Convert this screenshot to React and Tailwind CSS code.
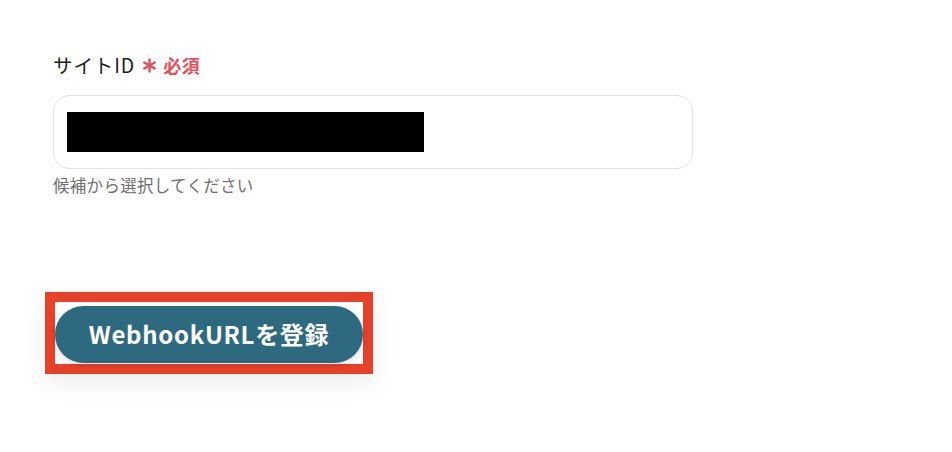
export default function App() {
  return (
    <div className="w-[952px] h-[452px] bg-white" style={{ fontFamily: '"Noto Sans CJK JP", "Noto Sans", sans-serif' }}>
      <div className="pl-[53px] pt-[51px]">
        <div className="flex items-center h-[28px]">
          <span className="text-[19.5px] text-[#222] tracking-[0.9px]">サイトID</span>
          <svg className="ml-[7px]" width="15" height="15" viewBox="0 0 16 16">
            <g stroke="#e5505a" strokeWidth="2.6" strokeLinecap="butt">
              <line x1="8" y1="0.5" x2="8" y2="15.5" />
              <line x1="1.5" y1="4.25" x2="14.5" y2="11.75" />
              <line x1="1.5" y1="11.75" x2="14.5" y2="4.25" />
            </g>
          </svg>
          <span className="ml-[6px] text-[18px] text-[#e5505a] font-bold tracking-[0.5px]">必須</span>
        </div>
        <div className="mt-[16px] w-[640px] h-[74px] border border-[#e2e2e2] rounded-[16px] flex items-center pl-[13px]">
          <div className="w-[357px] h-[40px] bg-black" />
        </div>
        <div className="mt-[4px] text-[16.5px] text-[#707070] tracking-[0.3px]">候補から選択してください</div>
        <div className="mt-[94px] -ml-[8px] w-[328px] h-[82px] border-[10px] border-[#e8412a] bg-white flex items-center shadow-[0_8px_24px_rgba(0,0,0,0.08)]">
          <button className="w-[308px] h-[57px] mt-[3px] rounded-full bg-[#2d6a80] text-white text-[24px] font-bold tracking-[0.7px] flex items-center justify-center shadow-[0_2px_6px_rgba(0,0,0,0.15)]">
            WebhookURLを登録
          </button>
        </div>
      </div>
    </div>
  );
}
